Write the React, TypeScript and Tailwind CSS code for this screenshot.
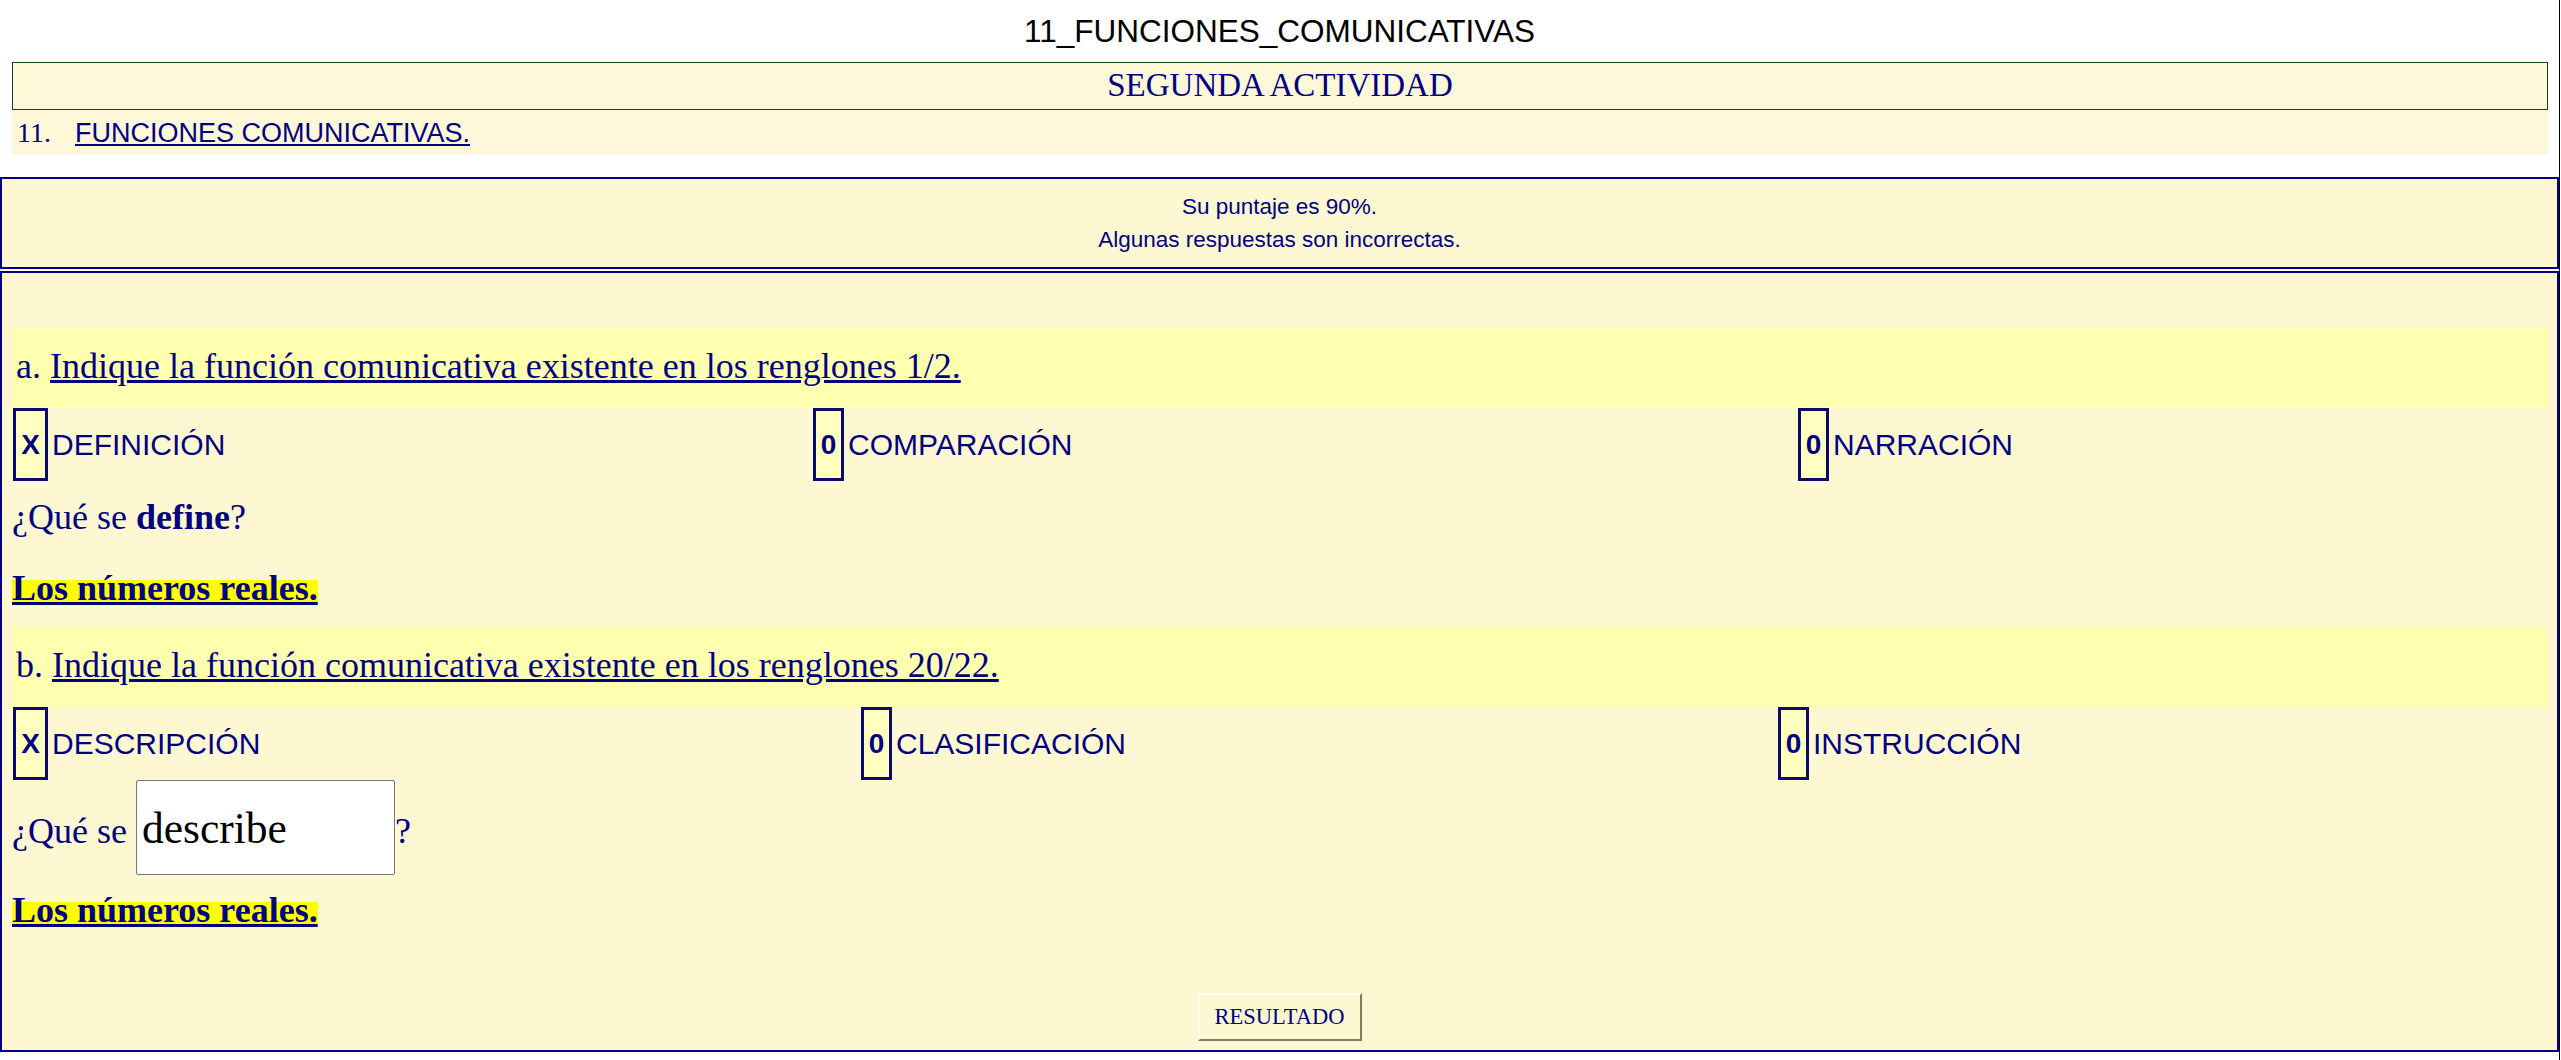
const sans = "font-['Liberation_Sans',Arial,sans-serif]";
const serif = "font-['Liberation_Serif','Times_New_Roman',serif]";

const rowA = [
  { mark: "X", label: "DEFINICIÓN", width: "w-[800px]" },
  { mark: "0", label: "COMPARACIÓN", width: "w-[985px]" },
  { mark: "0", label: "NARRACIÓN", width: "" },
];

const rowB = [
  { mark: "X", label: "DESCRIPCIÓN", width: "w-[848px]" },
  { mark: "0", label: "CLASIFICACIÓN", width: "w-[917px]" },
  { mark: "0", label: "INSTRUCCIÓN", width: "" },
];

function Options({ items }: { items: { mark: string; label: string; width: string }[] }) {
  return (
    <div className={`flex h-[73px] items-stretch pl-[1px] ${sans}`}>
      {items.map((it) => (
        <div key={it.label} className={`flex items-center ${it.width}`}>
          <span
            className={`flex h-[73px] items-center justify-center border-[3px] border-[#0a0a6a] bg-[#ffffc0] text-[28px] font-bold ${
              it.mark === "X" ? "w-[35px]" : "w-[31px]"
            }`}
          >
            {it.mark}
          </span>
          <span className="ml-[4px] text-[30px]">{it.label}</span>
        </div>
      ))}
    </div>
  );
}

function Question({ letter, text }: { letter: string; text: string }) {
  return (
    <div className="h-[80px] bg-[#ffffb0] pl-[4px] pt-[18px] text-[36px] leading-[41.5px]">
      {letter}{" "}
      <a href="#" className="underline">
        {text}
      </a>
    </div>
  );
}

// the yellow highlight sits on a smaller outer span, so it is shorter than the bold text
function Answer({ className }: { className: string }) {
  return (
    <div className={`text-[36px] leading-[41.5px] ${className}`}>
      <span className="bg-[#ffff00] text-[22.5px] leading-none">
        <span className="text-[36px] font-bold leading-[41.5px] underline">Los números reales.</span>
      </span>
    </div>
  );
}

export default function App() {
  return (
    <div className={`min-h-[1060px] w-[2560px] border-r border-black bg-white leading-[normal] ${serif}`}>
      <div className={`h-[62px] pt-[12.5px] text-center text-[31.5px] text-black ${sans}`}>
        11_FUNCIONES_COMUNICATIVAS
      </div>

      <div className="ml-[12px] mr-[11px] h-[48px] border border-[#1f3f0f] bg-[#fef8d8] pt-[4px] text-center text-[33px] text-[#000080]">
        SEGUNDA ACTIVIDAD
      </div>
      <div className={`ml-[12px] mr-[11px] h-[44px] bg-[#fef8d8] pl-[5px] pt-[6.5px] text-[27px] text-[#000080] ${sans}`}>
        <span className={`text-[28px] ${serif}`}>11.</span>
        <a href="#" className="ml-[24px] underline">
          FUNCIONES COMUNICATIVAS.
        </a>
      </div>

      <div className={`mt-[23px] border-2 border-[#000080] bg-[#fdf8d2] pb-[11px] pt-[10.5px] text-center text-[22.5px] leading-[33px] text-[#000080] ${sans}`}>
        <p>Su puntaje es 90%.</p>
        <p>Algunas respuestas son incorrectas.</p>
      </div>

      <div className="mt-[2px] border-2 border-[#000080] bg-[#fdf8d2] px-[10px] pb-[9px] pt-[55.7px] text-[#000080]">
        <Question letter="a." text="Indique la función comunicativa existente en los renglones 1/2." />
        <Options items={rowA} />
        <div className="mt-[15.5px] text-[36px] leading-[41.5px]">
          ¿Qué se <b>define</b>?
        </div>
        <Answer className="mt-[30px]" />

        <div className="mt-[17px]">
          <Question letter="b." text="Indique la función comunicativa existente en los renglones 20/22." />
        </div>
        <div className="mt-[0.5px]">
          <Options items={rowB} />
        </div>
        <div className="text-[36px] leading-[41.5px]">
          ¿Qué se{" "}
          <input
            readOnly
            value="describe"
            className={`h-[95px] w-[259px] rounded-[2px] border border-[#767676] bg-white pl-[5px] align-baseline text-[43.5px] leading-[normal] text-black ${serif}`}
          />
          ?
        </div>
        <Answer className="mt-[15px]" />

        <div className="mt-[61px] flex justify-center">
          <button className="h-[48px] w-[164px] border-2 border-b-[#7f7f5f] border-l-[#fffff0] border-r-[#7f7f5f] border-t-[#fffff0] bg-[#fdf8d2] text-[22.5px] text-[#000080]">
            RESULTADO
          </button>
        </div>
      </div>
    </div>
  );
}
